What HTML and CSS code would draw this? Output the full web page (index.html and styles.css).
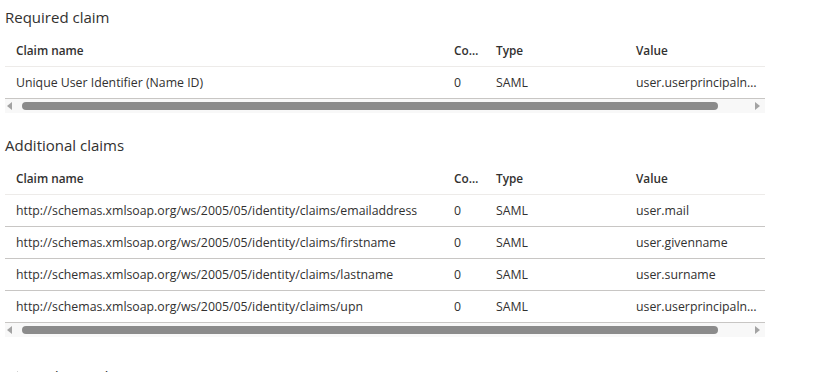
FILE: index.html
```
<!DOCTYPE html>
<html lang="en">
<head>
<meta charset="utf-8">
<title>Claims</title>
<link rel="stylesheet" href="styles.css">
</head>
<body>
<main class="page">
  <section class="claims">
    <h2 class="claims__title">Required claim</h2>
    <div class="grid">
      <div class="grid__row grid__row--head">
        <div class="cell">Claim name</div>
        <div class="cell">Condition</div>
        <div class="cell">Type</div>
        <div class="cell">Value</div>
      </div>
      <div class="grid__row">
        <div class="cell">Unique User Identifier (Name ID)</div>
        <div class="cell">0</div>
        <div class="cell">SAML</div>
        <div class="cell">user.userprincipalname</div>
      </div>
      <div class="scrollbar">
        <span class="scrollbar__arrow scrollbar__arrow--left"></span>
        <span class="scrollbar__thumb"></span>
        <span class="scrollbar__arrow scrollbar__arrow--right"></span>
      </div>
    </div>
  </section>

  <section class="claims claims--additional">
    <h2 class="claims__title">Additional claims</h2>
    <div class="grid">
      <div class="grid__row grid__row--head">
        <div class="cell">Claim name</div>
        <div class="cell">Condition</div>
        <div class="cell">Type</div>
        <div class="cell">Value</div>
      </div>
      <div class="grid__row">
        <div class="cell">http://schemas.xmlsoap.org/ws/2005/05/identity/claims/emailaddress</div>
        <div class="cell">0</div>
        <div class="cell">SAML</div>
        <div class="cell">user.mail</div>
      </div>
      <div class="grid__row">
        <div class="cell">http://schemas.xmlsoap.org/ws/2005/05/identity/claims/firstname</div>
        <div class="cell">0</div>
        <div class="cell">SAML</div>
        <div class="cell">user.givenname</div>
      </div>
      <div class="grid__row">
        <div class="cell">http://schemas.xmlsoap.org/ws/2005/05/identity/claims/lastname</div>
        <div class="cell">0</div>
        <div class="cell">SAML</div>
        <div class="cell">user.surname</div>
      </div>
      <div class="grid__row">
        <div class="cell">http://schemas.xmlsoap.org/ws/2005/05/identity/claims/upn</div>
        <div class="cell">0</div>
        <div class="cell">SAML</div>
        <div class="cell">user.userprincipalname</div>
      </div>
      <div class="scrollbar">
        <span class="scrollbar__arrow scrollbar__arrow--left"></span>
        <span class="scrollbar__thumb"></span>
        <span class="scrollbar__arrow scrollbar__arrow--right"></span>
      </div>
    </div>
  </section>

  <div class="advanced">
    <svg class="advanced__icon" width="12" height="12" viewBox="0 0 12 12" aria-hidden="true">
      <path d="M4 2l4 4-4 4" fill="none" stroke="#323130" stroke-width="1.2"/>
    </svg>
    <span>Advanced settings</span>
  </div>
</main>
</body>
</html>
```

FILE: styles.css
```
* { box-sizing: border-box; }

html, body {
  margin: 0;
  padding: 0;
  background: #ffffff;
}

body {
  font-family: "Open Sans", "Noto Sans", Arial, sans-serif;
  color: #323130;
  font-size: 12.3px;
}

.page {
  padding: 7px 0 0 5px;
  width: 770px;
  height: 372px;
  overflow: hidden;
}

.claims__title {
  margin: 0;
  font-size: 15px;
  font-weight: 400;
  line-height: 20px;
}

.claims--additional {
  margin-top: 22px;
}

.grid {
  margin-top: 8px;
  width: 760px;
}

.grid__row {
  display: grid;
  grid-template-columns: 438px 42px 140px 140px;
  height: 32px;
  align-items: center;
  border-bottom: 1px solid #c8c6c4;
}

.grid__row--head {
  font-weight: 600;
  font-size: 11.8px;
  padding-bottom: 2px;
  border-bottom-color: #edebe9;
}

.cell {
  padding: 0 4px 0 11px;
  white-space: nowrap;
  overflow: hidden;
  text-overflow: ellipsis;
}

.scrollbar {
  display: flex;
  align-items: center;
  height: 14px;
  background: #f8f8f8;
  padding: 0 5px 0 0;
}

.scrollbar__arrow {
  width: 0;
  height: 0;
  border-top: 4px solid transparent;
  border-bottom: 4px solid transparent;
}

.scrollbar__arrow--left {
  border-right: 5px solid #a3a3a3;
  margin-left: 2px;
}

.scrollbar__arrow--right {
  border-left: 5px solid #a3a3a3;
  margin-left: auto;
}

.scrollbar__thumb {
  height: 8px;
  width: 696px;
  margin-left: 10px;
  background: #8b8b8b;
  border-radius: 4px;
}

.advanced {
  display: flex;
  align-items: center;
  gap: 15px;
  margin-top: 29px;
  padding-left: 8px;
  font-size: 15px;
  line-height: 20px;
}
```
